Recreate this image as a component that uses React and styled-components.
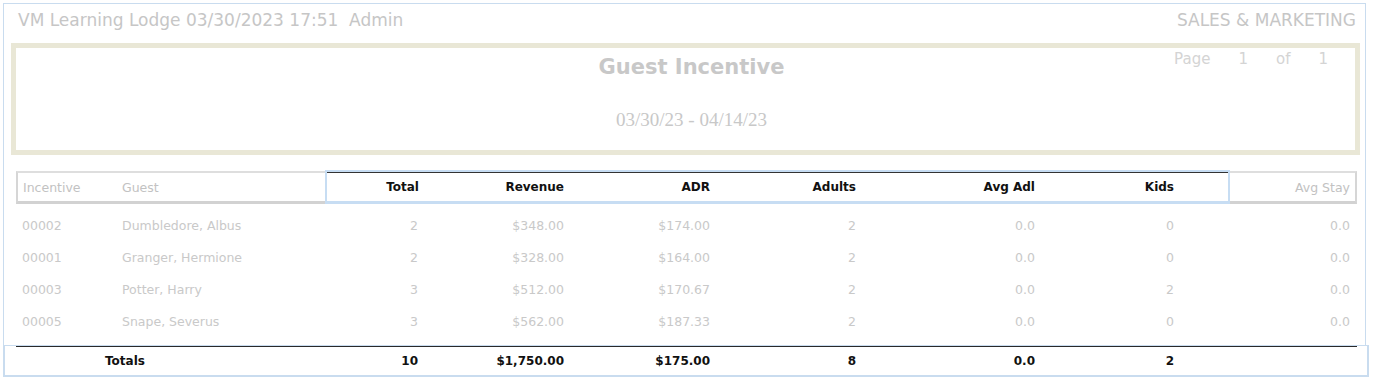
import React from "react";
import styled, { createGlobalStyle } from "styled-components";

const GlobalStyle = createGlobalStyle`
  body {
    margin: 0;
    background: #ffffff;
    font-family: "DejaVu Sans", Verdana, sans-serif;
  }
`;

const COLS = [100, 209, 99, 145, 146, 146, 179, 139, 51, 127];

const Page = styled.div`
  box-sizing: border-box;
  width: 1363px;
  margin: 3px 0 0 3px;
  padding-bottom: 8px;
  border: 1px solid #c9dcef;
  border-bottom: none;
`;

const TopBar = styled.div`
  display: flex;
  justify-content: space-between;
  padding: 6px 9px 0 14px;
  height: 34px;
  box-sizing: border-box;
  font-size: 17px;
  line-height: 20px;
  color: #c6c6c6;
`;

const TitleBox = styled.div`
  display: grid;
  grid-template-columns: 1fr auto 1fr;
  height: 112px;
  box-sizing: border-box;
  margin: 5px 5px 0 7px;
  border: 5px solid #e9e7d6;
`;

const Center = styled.div`
  display: flex;
  flex-direction: column;
  align-items: center;
  padding: 5px 0 0 12px;
`;

const Title = styled.div`
  font-size: 21px;
  font-weight: bold;
  line-height: 28px;
  color: #c8c8c8;
`;

const DateRange = styled.div`
  margin-top: 28px;
  font-family: "Liberation Serif", "Times New Roman", serif;
  font-size: 19px;
  line-height: 22px;
  color: #c8c8c8;
`;

const PageInfo = styled.div`
  display: flex;
  justify-content: flex-end;
  gap: 28px;
  padding: 1px 27px 0 0;
  font-size: 15px;
  line-height: 20px;
  color: #d4d4d4;
`;

const Table = styled.div`
  margin: 15px 0 0 12px;
  width: 1341px;
`;

const HeadRow = styled.div`
  display: flex;
  height: 34px;
`;

const GrayGroup = styled.div`
  display: flex;
  box-sizing: border-box;
  margin-top: 1px;
  border-top: 2px solid #dedede;
  border-bottom: 3px solid #d2d2d2;
  border-left: ${(p) => (p.$side === "left" ? "2px solid #d6d6d6" : "none")};
  border-right: ${(p) => (p.$side === "right" ? "2px solid #d6d6d6" : "none")};
`;

const BlueGroup = styled.div`
  display: flex;
  box-sizing: border-box;
  border: 2px solid #c7ddf3;
  box-shadow: inset 0 1px 0 #333333;
  border-bottom-width: 3px;
`;

const Cell = styled.div`
  box-sizing: border-box;
  width: ${(p) => p.$w}px;
  flex: none;
  display: flex;
  align-items: center;
  justify-content: ${(p) => (p.$left ? "flex-start" : "flex-end")};
  padding: ${(p) => (p.$left ? `0 0 0 ${p.$pad ?? 6}px` : `0 ${p.$pad ?? 5}px 0 0`)};
  font-size: ${(p) => (p.$bold ? "12px" : "12.5px")};
  font-weight: ${(p) => (p.$bold ? "bold" : "normal")};
  color: ${(p) => p.$color || "#c9c9c9"};
  white-space: nowrap;
`;

const Rows = styled.div`
  margin-top: 5px;
`;

const Row = styled.div`
  display: flex;
  height: 32px;
`;

const TotalsBar = styled.div`
  box-sizing: border-box;
  width: 1366px;
  margin-left: 3px;
  height: 32px;
  border: 2px solid #c9dcef;
  border-top-width: 1px;
  padding-left: 11px;
`;

const TotalsRow = styled.div`
  display: flex;
  width: 1341px;
  height: 29px;
  border-top: 1px solid #2a2a2a;
  box-sizing: border-box;
`;

const rows = [
  ["00002", "Dumbledore, Albus", "2", "$348.00", "$174.00", "2", "0.0", "0", "0.0"],
  ["00001", "Granger, Hermione", "2", "$328.00", "$164.00", "2", "0.0", "0", "0.0"],
  ["00003", "Potter, Harry", "3", "$512.00", "$170.67", "2", "0.0", "2", "0.0"],
  ["00005", "Snape, Severus", "3", "$562.00", "$187.33", "2", "0.0", "0", "0.0"],
];

const midHeads = ["Total", "Revenue", "ADR", "Adults", "Avg Adl", "Kids"];
const totals = ["10", "$1,750.00", "$175.00", "8", "0.0", "2"];

export default function App() {
  return (
    <>
      <GlobalStyle />
      <Page>
        <TopBar>
          <span>VM Learning Lodge 03/30/2023 17:51&nbsp; Admin</span>
          <span>SALES &amp; MARKETING</span>
        </TopBar>
        <TitleBox>
          <div />
          <Center>
            <Title>Guest Incentive</Title>
            <DateRange>03/30/23 - 04/14/23</DateRange>
          </Center>
          <PageInfo>
            <span>Page</span>
            <span>1</span>
            <span>of</span>
            <span>1</span>
          </PageInfo>
        </TitleBox>
        <Table>
          <HeadRow>
            <GrayGroup $side="left">
              <Cell $w={COLS[0] - 2} $left $pad={5} $color="#c2c2c2">Incentive</Cell>
              <Cell $w={COLS[1]} $left $pad={6} $color="#c2c2c2">Guest</Cell>
            </GrayGroup>
            <BlueGroup>
              {midHeads.map((h, i) => (
                <Cell key={h} $w={i === 0 ? COLS[2] - 2 : COLS[i + 2]} $bold $color="#111111">
                  {h}
                </Cell>
              ))}
              <Cell $w={COLS[8] - 2} />
            </BlueGroup>
            <GrayGroup $side="right">
              <Cell $w={COLS[9] - 2} $pad={5} $color="#c2c2c2">Avg Stay</Cell>
            </GrayGroup>
          </HeadRow>
          <Rows>
            {rows.map((r) => (
              <Row key={r[0]}>
                <Cell $w={COLS[0]} $left>{r[0]}</Cell>
                <Cell $w={COLS[1]} $left>{r[1]}</Cell>
                {r.slice(2, 8).map((v, i) => (
                  <Cell key={i} $w={COLS[i + 2]} $pad={i === 0 ? 6 : 5}>{v}</Cell>
                ))}
                <Cell $w={COLS[8]} />
                <Cell $w={COLS[9]} $pad={7}>{r[8]}</Cell>
              </Row>
            ))}
          </Rows>
        </Table>
      </Page>
      <TotalsBar>
        <TotalsRow>
          <Cell $w={COLS[0] + COLS[1]} $left $pad={89} $bold $color="#111111">Totals</Cell>
          {totals.map((v, i) => (
            <Cell key={i} $w={COLS[i + 2]} $pad={i === 0 ? 6 : 5} $bold $color="#111111">{v}</Cell>
          ))}
          <Cell $w={COLS[8] + COLS[9]} />
        </TotalsRow>
      </TotalsBar>
    </>
  );
}
